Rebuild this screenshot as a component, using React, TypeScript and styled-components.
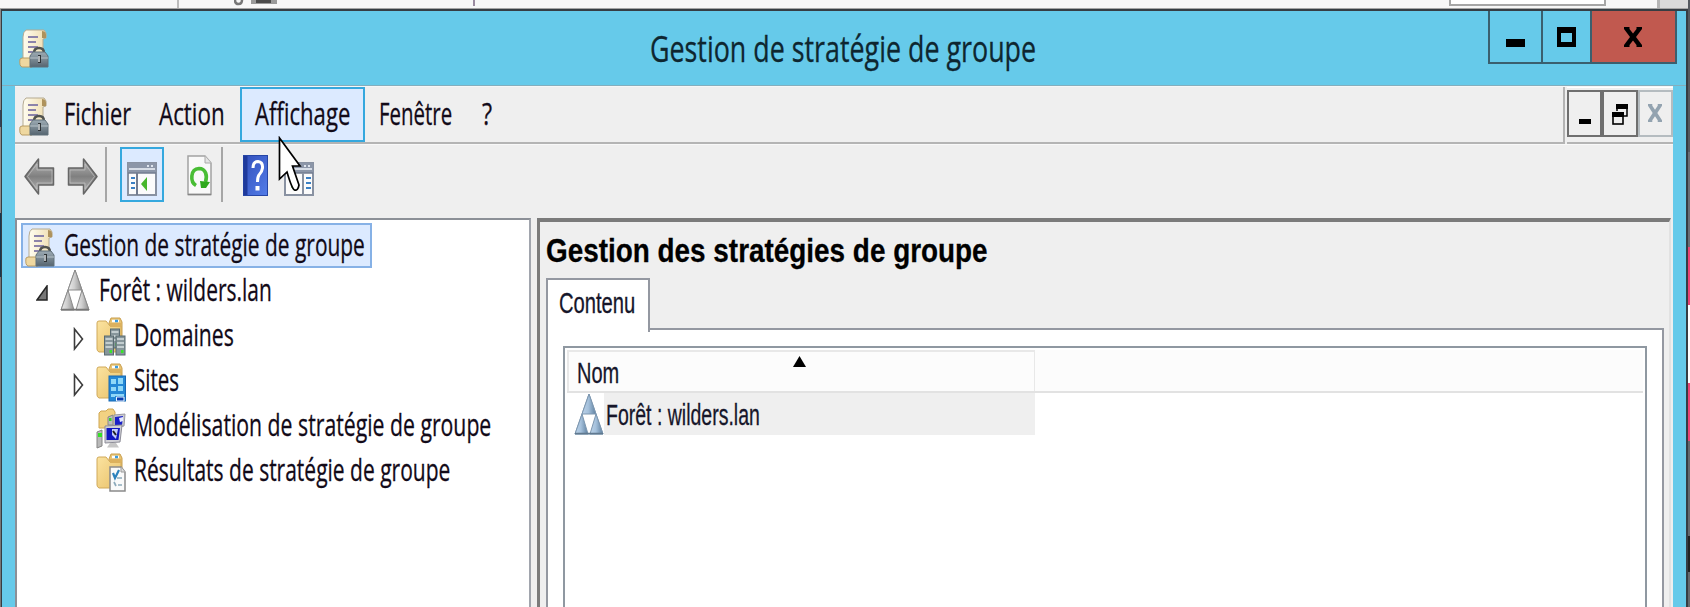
import React, { useLayoutEffect, useRef, useState } from 'react';
import styled, { createGlobalStyle } from 'styled-components';

const Global = createGlobalStyle`
  * { box-sizing: border-box; }
  html, body { margin: 0; padding: 0; overflow: hidden; }
  svg { display: block; flex: none; }
`;

const UI = '"Open Sans", "Noto Sans", sans-serif';
const CLASSIC = '"Liberation Sans", Arial, sans-serif';

/* ---------- text drawn at a fixed width ---------- */

const TextBox = styled.span<{ $w: number; $size: number; $face: string; $bold?: boolean; $color: string }>`
  display: block;
  flex: none;
  width: ${p => p.$w}px;
  height: ${p => p.$size * 1.3}px;
  line-height: ${p => p.$size * 1.3}px;
  font-family: ${p => p.$face};
  font-size: ${p => p.$size}px;
  font-weight: ${p => (p.$bold ? 700 : 400)};
  color: ${p => p.$color};
  white-space: nowrap;
  -webkit-text-stroke: 0.3px ${p => p.$color};
`;

const TextInk = styled.span`
  display: inline-block;
  transform-origin: 0 50%;
`;

interface FitProps {
  w: number;
  size?: number;
  face?: string;
  bold?: boolean;
  color?: string;
  children: string;
}

function Fit({ w, size = 30.5, face = UI, bold, color = '#120a18', children }: FitProps) {
  const ref = useRef<HTMLSpanElement>(null);
  const [scale, setScale] = useState(0.65);
  useLayoutEffect(() => {
    if (ref.current) setScale(w / ref.current.offsetWidth);
  }, [w, children]);
  return (
    <TextBox $w={w} $size={size} $face={face} $bold={bold} $color={color}>
      <TextInk ref={ref} style={{ transform: `scaleX(${scale})` }}>{children}</TextInk>
    </TextBox>
  );
}

/* ---------- layout ---------- */

const Desktop = styled.div`
  position: relative;
  display: flex;
  flex-direction: column;
  width: 1690px;
  height: 607px;
  overflow: hidden;
  padding: 0 2px 0 1px;
  background:
    linear-gradient(#55595f 0 152px, #6a6e75 152px 247px, #ea4473 247px 305px, #fff 305px 383px, #ea4473 383px 441px, #65686c 441px 536px, #222 536px 572px, #65686c 572px) right / 2px 100% no-repeat,
    linear-gradient(#8a8a8a 0 110px, #30435a 110px 127px, #8a8a8a 127px 213px, #16384f 213px 277px, #777 277px) left / 1px 100% no-repeat;
`;

const Behind = styled.div`
  display: flex;
  flex: none;
  height: 9px;
  margin-left: -1px;
  background: #f7f7f7;
  border-bottom: 1px solid #a5a5a5;
`;
const BehindCell = styled.div<{ $w: number }>`
  display: flex;
  width: ${p => p.$w}px;
  height: 8px;
  border-right: 2px solid #bcbcbc;
`;
const BehindTool = styled.div`
  display: flex;
  width: 296px;
  padding-left: 55px;
  border-right: 2px solid #9a8ba0;
  height: 6px;
`;
const BehindField = styled.div`
  width: 157px;
  height: 6px;
  margin-left: 974px;
  border: 2px solid #a6a6a6;
  border-top: 0;
  background: #fff;
`;
const BehindScroll = styled.div`
  width: 31px;
  height: 8px;
  margin-left: 51px;
  border-left: 3px solid #b5b5b5;
  background: #dadada;
`;

const Window = styled.div`
  display: flex;
  flex-direction: column;
  flex: 1;
  min-height: 0;
  background: #66caea;
  border: 2px solid #363d43;
  border-left-width: 1px;
  border-bottom: 0;
`;

const TitleBar = styled.div`
  display: flex;
  height: 75px;
  flex: none;
  padding-left: 17px;
  border-bottom: 1px solid #84aebd;
`;
const TitleIcon = styled.div`
  padding-top: 18px;
  width: 631px;
`;
const TitleText = styled.div`
  padding-top: 14px;
  width: 838px;
`;
const Controls = styled.div`
  display: flex;
  width: 189px;
  height: 53px;
  border: 2px solid #3a5f6e;
  border-top: 0;
`;
const Control = styled.div<{ $w: number; $close?: boolean }>`
  display: flex;
  justify-content: center;
  width: ${p => p.$w}px;
  padding-top: 16px;
  background: ${p => (p.$close ? '#c1594f' : 'transparent')};
  & + & { border-left: 2px solid #3a5f6e; }
`;

const Client = styled.div`
  display: flex;
  flex-direction: column;
  flex: 1;
  min-height: 0;
  margin: 0 13px 0 13px;
  background: #efefef;
  border-top: 1px solid #f6f6f6;
`;

const MenuRow = styled.div`
  display: flex;
  flex: none;
  height: 57px;
`;
const MenuBar = styled.div`
  display: flex;
  flex: none;
  width: 1550px;
  padding-left: 4px;
  border-right: 2px solid #b4b4b4;
  border-bottom: 2px solid #b4b4b4;
`;
const MenuIcon = styled.div`
  width: 31px;
  padding-top: 10px;
`;
const MenuItem = styled.div<{ $pad: number; $active?: boolean }>`
  height: 55px;
  padding: ${p => (p.$active ? '5px' : '7px')} ${p => p.$pad}px 0;
  background: ${p => (p.$active ? '#dceaff' : 'transparent')};
  border: ${p => (p.$active ? '2px solid #35a8de' : '0')};
`;
const ChildControls = styled.div`
  display: flex;
  flex: 1;
  margin-left: 2px;
  padding-top: 2px;
  border-top: 1px solid #fff;
  border-bottom: 2px solid #b4b4b4;
`;
const ChildControl = styled.div<{ $off?: boolean }>`
  display: flex;
  justify-content: center;
  flex: 1;
  height: 47px;
  padding-top: 12px;
  border: 2px solid ${p => (p.$off ? '#b5bcc0' : '#6f6f6f')};
`;

const ToolBar = styled.div`
  display: flex;
  flex: none;
  height: 74px;
  padding: 3px 0 0 9px;
  border-top: 1px solid #f8f8f8;
`;
const Tool = styled.div<{ $w: number; $top: number; $left?: number }>`
  width: ${p => p.$w}px;
  padding: ${p => p.$top}px 0 0 ${p => p.$left ?? 0}px;
`;
const ActiveTool = styled.div`
  width: 44px;
  height: 55px;
  margin: -1px 23px 0 13px;
  padding: 13px 0 0 5px;
  background: #dceaff;
  border: 2px solid #35a8de;
`;
const Divider = styled.div`
  width: 2px;
  height: 55px;
  margin-top: -1px;
  background: #a6a6a6;
`;

const Panes = styled.div`
  display: flex;
  flex: 1;
  min-height: 0;
`;
const Tree = styled.div`
  flex: none;
  width: 516px;
  padding: 3px 0 0 4px;
  background: #fff;
  border: 2px solid #8c9097;
  border-bottom: 0;
  border-right-color: #a1a5ad;
`;
const TreeRow = styled.div<{ $indent: number; $selected?: boolean }>`
  display: flex;
  width: ${p => (p.$selected ? '351px' : 'auto')};
  height: 45.2px;
  padding-left: ${p => p.$indent}px;
  background: ${p => (p.$selected ? '#dceaff' : 'transparent')};
  border: ${p => (p.$selected ? '2px solid #86b1e6' : '0')};
`;
const TreeCell = styled.div<{ $w: number; $top: number }>`
  flex: none;
  width: ${p => p.$w}px;
  padding-top: ${p => p.$top}px;
`;
const TreeLabel = styled.div`
  padding-top: 1.5px;
`;

const Detail = styled.div`
  display: flex;
  flex-direction: column;
  flex: 1;
  margin: 0 2px 0 6px;
  padding-left: 6px;
  border-left: 3px solid #7b7b7b;
  border-top: 4px solid #7b7b7b;
  border-right: 2px solid #e2e2e2;
`;
const Heading = styled.div`
  flex: none;
  height: 56px;
  padding: 7px 0 0 0;
`;
const Tab = styled.div`
  flex: none;
  z-index: 1;
  width: 104px;
  height: 54px;
  margin-bottom: -4px;
  padding: 3px 0 0 11px;
  background: #fff;
  border: 2px solid #9498a1;
  border-bottom: 0;
`;
const TabPage = styled.div`
  display: flex;
  flex: 1;
  width: 1118px;
  padding: 16px 15px 0;
  background: #fff;
  border: 2px solid #9498a1;
  border-bottom: 0;
`;
const List = styled.div`
  flex: 1;
  padding: 2px 2px 0 2px;
  border: 2px solid #8f98a1;
  border-bottom: 0;
`;
const ListHeader = styled.div`
  display: flex;
  height: 43px;
  background: #fcfcfc;
  border-bottom: 2px solid #e2e2e2;
`;
const Column = styled.div`
  display: flex;
  width: 468px;
  padding-left: 8px;
  border: 2px solid #e8e8e8;
  border-bottom: 0;
  border-right-width: 1px;
`;
const ColumnText = styled.div`
  width: 216px;
  margin-top: 1px;
`;
const SortMark = styled.div`
  padding-top: 4px;
`;
const ListRow = styled.div`
  display: flex;
  width: 468px;
  height: 42px;
  padding-left: 7px;
`;
const ListCell = styled.div`
  flex: 1;
  padding: 2px 0 0 2px;
  background: #efefef;
`;

const Pointer = styled.div`
  position: absolute;
  left: 278px;
  top: 136px;
`;

/* ---------- icons ---------- */

const ScrollIcon = () => (
  <svg width="30" height="39" viewBox="0 0 30 39">
    <defs>
      <linearGradient id="paper" x1="0" x2="1"><stop offset="0" stopColor="#fffdf0" /><stop offset="1" stopColor="#efddb0" /></linearGradient>
      <linearGradient id="case" x1="0" x2="0" y1="0" y2="1"><stop offset="0" stopColor="#9dabb4" /><stop offset="1" stopColor="#566570" /></linearGradient>
    </defs>
    <path d="M7 1H25Q28 3 27 9L24 10V31H4V8Q4 3 7 1Z" fill="url(#paper)" stroke="#b5aa91" />
    <path d="M23 2Q28 2 27 9L23 9Z" fill="#ae925c" />
    <path d="M9 8H19M9 13H17M9 18H19M9 23H15" stroke="#8c83aa" strokeWidth="2" />
    <path d="M1 30Q0 37 3 38H13V29H3Z" fill="#efd8a0" stroke="#b99d65" />
    <path d="M15 24Q15 19 20 19Q25 19 25 24" fill="none" stroke="#51534f" strokeWidth="2.4" />
    <path d="M11 27L14 23H26L29 27V38H11Z" fill="url(#case)" stroke="#60707b" />
    <path d="M11 29H29" stroke="#b6c2c8" />
    <path d="M20.500 26V34" stroke="#2e3336" strokeWidth="3" />
    <path d="M20 27V33" stroke="#e7ecee" strokeWidth="1.400" />
  </svg>
);

const ForestIcon = ({ blue }: { blue?: boolean }) => {
  const id = blue ? 'fb' : 'fg';
  const edge = blue ? '#7d97b0' : '#8b8b8b';
  return (
    <svg width="30" height="42" viewBox="0 0 30 42">
      <defs>
        <linearGradient id={id}>
          <stop offset="0" stopColor={blue ? '#bcd2e8' : '#ececec'} />
          <stop offset=".45" stopColor={blue ? '#a5c1dc' : '#cfcfcf'} />
          <stop offset="1" stopColor={blue ? '#5d7f9f' : '#8f8f8f'} />
        </linearGradient>
      </defs>
      <path d="M15 1L29 41H1Z" fill="#fff" stroke={edge} />
      <path d="M15 1L22 21H8Z" fill={`url(#${id})`} stroke={edge} />
      <path d="M8 21L14 41H1Z" fill={`url(#${id})`} stroke={edge} />
      <path d="M22 21L29 41H16Z" fill={`url(#${id})`} stroke={edge} />
      <path d="M1 40.500H29" stroke={blue ? '#61798f' : '#777'} strokeWidth="1.500" />
    </svg>
  );
};

const FolderBase = () => (
  <>
    <defs>
      <linearGradient id="fold" x1="0" x2="1" y1="0" y2="1"><stop offset="0" stopColor="#fbe3a0" /><stop offset="1" stopColor="#e8c068" /></linearGradient>
    </defs>
    <path d="M13 6L15 1H24L26 5V33H13Z" fill="#e9c473" stroke="#c99f4e" />
    <path d="M1 6Q1 4 3 4H10L14 9H25V33L22 35H3Q1 34 1 32Z" fill="url(#fold)" stroke="#d0a95a" />
    <path d="M14 6H25V10H14Z" fill="#dcb15e" />
    <path d="M16 4H23" stroke="#fff" strokeWidth="2.500" />
    <path d="M19 4H22" stroke="#3b9be0" strokeWidth="2.500" />
  </>
);

const Server = ({ x, y, h }: { x: number; y: number; h: number }) => (
  <g>
    <rect x={x} y={y} width="9" height={h} fill="#87969b" stroke="#596a70" />
    <path d={`M${x + 1} ${y + 3}h7M${x + 1} ${y + 7}h7M${x + 1} ${y + 11}h7`} stroke="#d6dfe1" strokeWidth="1.600" />
    <rect x={x + 5} y={y + h - 5} width="2.500" height="3" fill="#37e52a" />
  </g>
);

const DomainsIcon = () => (
  <svg width="30" height="39" viewBox="0 0 30 39">
    <FolderBase />
    <Server x={14.5} y={12} h={19} />
    <Server x={8.500} y={19} h={19} />
    <Server x={20} y={19} h={19} />
  </svg>
);

const SitesIcon = () => (
  <svg width="30" height="39" viewBox="0 0 30 39">
    <FolderBase />
    <rect x="13" y="13" width="16.500" height="25" fill="#2488d6" stroke="#1768b4" />
    <path d="M15 16h5v5h-5zM22 15h5v6h-5zM15 24h5v4h-5zM22 23h5v5h-5z" fill="#8fd8f8" />
    <path d="M15 31h4v3h-4zM19 31h9v2h-9z" fill="#8fd8f8" />
    <path d="M20.500 38V34H28V38Z" fill="#0b3fb0" stroke="#e6f4ff" />
  </svg>
);

const ModelIcon = () => (
  <svg width="30" height="41" viewBox="0 0 30 41">
    <path d="M3 5L5 3H10L12 1H17L19 4V20H3Z" fill="#f2d282" stroke="#cfa653" />
    <path d="M12 9L17 7V17H12Z" fill="#bdbdbd" stroke="#888" />
    <rect x="13" y="10" width="2.500" height="3" fill="#37d32a" />
    <path d="M18 7L29 6L28 18L18 20Z" fill="#c9c9cf" stroke="#9a9aa2" />
    <path d="M19 9L27 8L26 17L19 18Z" fill="#1a20c8" />
    <path d="M23 10L27 9V13L24 14Z" fill="#e4e8ff" />
    <path d="M9 18L26 17L24 34L9 35Z" fill="#d0d0d6" stroke="#8e8e98" />
    <path d="M10.500 20H24L22.500 32H10.500Z" fill="#1016c0" />
    <path d="M16 21H22L20 31L16 27Z" fill="#c5cdfb" />
    <path d="M17 23L20 27" stroke="#222" strokeWidth="2" />
    <path d="M14 35H20L23 39.500H11Z" fill="#c6c6c6" />
    <path d="M1 24L6 22V38L1 40Z" fill="#b9b9b9" stroke="#858585" />
    <path d="M2 25H6V29H2Z" fill="#35df27" />
  </svg>
);

const ResultsIcon = () => (
  <svg width="30" height="39" viewBox="0 0 30 39">
    <FolderBase />
    <path d="M14 14H25L29 19V38H14Z" fill="#fafafa" stroke="#8b8b8b" strokeWidth="1.500" />
    <path d="M25 14V19H29" fill="#ddd" stroke="#999" />
    <path d="M17 20L19 25L23 17" fill="none" stroke="#2c82bd" strokeWidth="2.200" />
    <path d="M21 25H26M18 29L20 33M22 32H26" stroke="#8caabb" strokeWidth="1.700" />
  </svg>
);

const ArrowIcon = ({ flip }: { flip?: boolean }) => (
  <svg width="31" height="39" viewBox="0 0 31 39">
    <defs>
      <linearGradient id="arr" x1="0" x2="0" y1="0" y2="1"><stop offset="0" stopColor="#b8b8b8" /><stop offset=".5" stopColor="#808080" /><stop offset="1" stopColor="#bababa" /></linearGradient>
    </defs>
    <g transform={flip ? 'translate(31 0) scale(-1 1)' : undefined}>
      <path d="M1 19.500L14.500 2V11H29.500V28H14.500V37Z" fill="url(#arr)" stroke="#666" strokeWidth="1.500" strokeLinejoin="round" />
      <path d="M3.500 19.500L13 7V13H28V26H13V32Z" fill="none" stroke="#c4c4c4" strokeWidth="1" opacity=".65" />
    </g>
  </svg>
);

const PaneIcon = ({ right }: { right?: boolean }) => (
  <svg width="30" height="34" viewBox="0 0 30 34">
    <rect x="1" y="1" width="28" height="32" fill="#fbfbfb" stroke="#8992a2" strokeWidth="2" />
    <rect x="1" y="1" width="28" height="10" fill="#8c96a8" />
    <path d="M2 7H28" stroke="#d7dde6" strokeWidth="2" />
    <path d="M20 4H22M24 4H26" stroke="#dfe5ee" strokeWidth="2" />
    <path d="M1 11H29" stroke="#737d90" strokeWidth="1.500" />
    {right ? (
      <>
        <path d="M19 11V33" stroke="#8992a2" strokeWidth="2" />
        <path d="M22 16H27M22 21H27M22 26H27" stroke="#3b80c4" strokeWidth="2.200" />
        <path d="M7 25L11 20V29Z" fill="#43b52c" />
      </>
    ) : (
      <>
        <path d="M10 11V33" stroke="#737d90" strokeWidth="2" />
        <path d="M4 16H8M4 21H8M4 26H8" stroke="#3b80c4" strokeWidth="2.200" />
        <path d="M14 22L20 15V29Z" fill="#47b62b" />
      </>
    )}
  </svg>
);

const RefreshIcon = () => (
  <svg width="25" height="41" viewBox="0 0 25 41">
    <path d="M1 1H18L24 8V39.500H1Z" fill="#f9f9f9" stroke="#a3a3a3" strokeWidth="1.500" />
    <path d="M1 39.500H24" stroke="#858585" strokeWidth="1.500" />
    <path d="M18 1V8H24" fill="#e5e5e5" stroke="#aaa" />
    <path d="M9 30.500C3 27 3 14 12 13.500C19 13.500 20.500 21 18.500 27" fill="none" stroke="#49bd35" strokeWidth="3.600" />
    <path d="M13 26L23 27L19 33H14Z" fill="#2fa91d" />
  </svg>
);

const HelpIcon = () => (
  <svg width="25" height="41" viewBox="0 0 25 41">
    <defs><linearGradient id="help" x1="0" x2="1" y1="0" y2="1"><stop offset="0" stopColor="#3350bb" /><stop offset="1" stopColor="#527ce8" /></linearGradient></defs>
    <rect x=".5" y=".5" width="24" height="40" fill="url(#help)" stroke="#2646a6" />
    <path d="M2.500 1V40" stroke="#1f3a9c" strokeWidth="4" />
    <path d="M10 13Q10 6.500 15 6.500Q20 7 19.500 13Q19 17 16 20Q14.500 22 14.500 27" fill="none" stroke="#fff" strokeWidth="3" />
    <rect x="12.500" y="31" width="4" height="4.500" fill="#fff" />
  </svg>
);

const PointerIcon = () => (
  <svg width="27" height="57" viewBox="0 0 27 57">
    <path d="M1.500 2L22 30H14.500L21 49Q20 55 16.500 54Q14 53 9 36L1.500 43Z" fill="#fff" stroke="#000" strokeWidth="1.700" />
  </svg>
);

const CrossIcon = ({ w, h, color }: { w: number; h: number; color: string }) => (
  <svg width={w} height={h} viewBox="0 0 18 20" preserveAspectRatio="none">
    <path d="M0 0H5.500V2L9 6.500L12.500 2V0H18V2L12 10L18 18V20H12.500V18L9 13.500L5.500 18V20H0V18L6 10L0 2Z" fill={color} />
  </svg>
);

const Expander = ({ open }: { open?: boolean }) =>
  open ? (
    <svg width="12" height="16" viewBox="0 0 12 16"><path d="M11 1V15H1Z" fill="#777" stroke="#252525" strokeWidth="1.500" /></svg>
  ) : (
    <svg width="11" height="24" viewBox="0 0 11 24"><path d="M1.500 2V22L9.500 12Z" fill="#fff" stroke="#3c3c3c" strokeWidth="1.600" /></svg>
  );

/* ---------- data ---------- */

const branches = [
  { label: 'Domaines', w: 100, Icon: DomainsIcon, expandable: true },
  { label: 'Sites', w: 45, Icon: SitesIcon, expandable: true },
  { label: 'Modélisation de stratégie de groupe', w: 357, Icon: ModelIcon, expandable: false },
  { label: 'Résultats de stratégie de groupe', w: 316, Icon: ResultsIcon, expandable: false },
];

export default function App() {
  return (
    <Desktop>
      <Global />
      <Behind>
        <BehindCell $w={179} />
        <BehindTool>
          <svg width="46" height="6" viewBox="0 0 46 6">
            <path d="M1 0Q1 4 4.500 4Q8 4 8 0" fill="none" stroke="#777" strokeWidth="2.500" />
            <path d="M17 0H43V4H17Z" fill="#9a9a9a" /><path d="M22 0H37V3H22Z" fill="#4b4b4b" />
          </svg>
        </BehindTool>
        <BehindField />
        <BehindScroll />
      </Behind>
      <Window>
        <TitleBar>
          <TitleIcon><ScrollIcon /></TitleIcon>
          <TitleText><Fit w={386} size={36.5} color="#0e2630">Gestion de stratégie de groupe</Fit></TitleText>
          <Controls>
            <Control $w={52}>
              <svg width="20" height="20" viewBox="0 0 20 20"><path d="M0 12H19V20H0Z" fill="#000" /></svg>
            </Control>
            <Control $w={49}>
              <svg width="20" height="20" viewBox="0 0 20 20"><path d="M0 0H19V20H0ZM4 6V15H15V6Z" fillRule="evenodd" fill="#000" /></svg>
            </Control>
            <Control $w={86} $close><CrossIcon w={18} h={20} color="#000" /></Control>
          </Controls>
        </TitleBar>
        <Client>
          <MenuRow>
            <MenuBar>
              <MenuIcon><ScrollIcon /></MenuIcon>
              <MenuItem $pad={13.5}><Fit w={67}>Fichier</Fit></MenuItem>
              <MenuItem $pad={15}><Fit w={66}>Action</Fit></MenuItem>
              <MenuItem $pad={13} $active><Fit w={95}>Affichage</Fit></MenuItem>
              <MenuItem $pad={14}><Fit w={73}>Fenêtre</Fit></MenuItem>
              <MenuItem $pad={16}><Fit w={10}>?</Fit></MenuItem>
            </MenuBar>
            <ChildControls>
              <ChildControl>
                <svg width="12" height="20" viewBox="0 0 12 20"><path d="M0 15H12V20H0Z" fill="#000" /></svg>
              </ChildControl>
              <ChildControl>
                <svg width="16" height="21" viewBox="0 0 16 21">
                  <path d="M5 7V1H15V12H12" fill="none" stroke="#000" strokeWidth="1.500" /><path d="M4 0H16V5H4Z" />
                  <rect x="1" y="9" width="10" height="11" fill="#efefef" stroke="#000" strokeWidth="1.600" /><path d="M0 8H12V13H0Z" />
                </svg>
              </ChildControl>
              <ChildControl $off><CrossIcon w={14} h={18} color="#93a3b0" /></ChildControl>
            </ChildControls>
          </MenuRow>
          <ToolBar>
            <Tool $w={43} $top={8.5}><ArrowIcon /></Tool>
            <Tool $w={38} $top={8.5}><ArrowIcon flip /></Tool>
            <Divider />
            <ActiveTool><PaneIcon /></ActiveTool>
            <Tool $w={34} $top={7}><RefreshIcon /></Tool>
            <Divider />
            <Tool $w={41} $top={7} $left={20}><HelpIcon /></Tool>
            <Tool $w={50} $top={14} $left={20}><PaneIcon right /></Tool>
          </ToolBar>
          <Panes>
            <Tree>
              <TreeRow $indent={2} $selected>
                <TreeCell $w={39} $top={3}><ScrollIcon /></TreeCell>
                <Fit w={301}>Gestion de stratégie de groupe</Fit>
              </TreeRow>
              <TreeRow $indent={15}>
                <TreeCell $w={23.5} $top={17}><Expander open /></TreeCell>
                <TreeCell $w={39} $top={1}><ForestIcon /></TreeCell>
                <TreeLabel><Fit w={173}>Forêt : wilders.lan</Fit></TreeLabel>
              </TreeRow>
              {branches.map(({ label, w, Icon, expandable }) => (
                <TreeRow key={label} $indent={51.5}>
                  <TreeCell $w={23} $top={14}>{expandable && <Expander />}</TreeCell>
                  <TreeCell $w={38} $top={4}><Icon /></TreeCell>
                  <TreeLabel><Fit w={w}>{label}</Fit></TreeLabel>
                </TreeRow>
              ))}
            </Tree>
            <Detail>
              <Heading><Fit w={442} size={33.5} face={CLASSIC} bold color="#000">Gestion des stratégies de groupe</Fit></Heading>
              <Tab><Fit w={76} size={30} face={CLASSIC} color="#16162a">Contenu</Fit></Tab>
              <TabPage>
                <List>
                  <ListHeader>
                    <Column>
                      <ColumnText><Fit w={42} size={30} face={CLASSIC} color="#16162a">Nom</Fit></ColumnText>
                      <SortMark><svg width="13" height="11" viewBox="0 0 13 11"><path d="M6.500 0L13 11H0Z" /></svg></SortMark>
                    </Column>
                  </ListHeader>
                  <ListRow>
                    <ForestIcon blue />
                    <ListCell><Fit w={154} size={30} face={CLASSIC} color="#16162a">Forêt : wilders.lan</Fit></ListCell>
                  </ListRow>
                </List>
              </TabPage>
            </Detail>
          </Panes>
        </Client>
      </Window>
      <Pointer><PointerIcon /></Pointer>
    </Desktop>
  );
}
